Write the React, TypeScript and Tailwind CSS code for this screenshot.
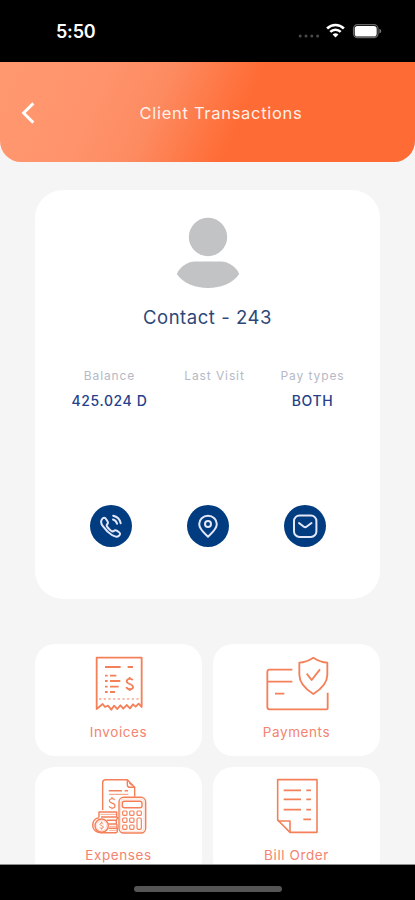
import type { ReactNode } from 'react';

const ORANGE = '#f4805a';

function StatusBar() {
  return (
    <div className="flex h-[62px] shrink-0 items-start justify-between bg-black pr-[33px] pl-[56px]">
      <span className="mt-[20px] text-[18px] leading-6 font-semibold tracking-[-0.2px] text-white">5:50</span>
      <div className="mt-[23px] flex items-center">
        <svg width="22" height="16" viewBox="0 0 22 16" fill="#4a4a4a">
          <circle cx="2.2" cy="13" r="1.5" />
          <circle cx="8" cy="13" r="1.5" />
          <circle cx="13.8" cy="13" r="1.5" />
          <circle cx="19.6" cy="13" r="1.5" />
        </svg>
        <svg className="ml-[6px]" width="19" height="16" viewBox="0 0 19 16" fill="none" stroke="#fff" strokeWidth="2.6">
          <path d="M1.1 5.5a12 12 0 0 1 16.8 0" />
          <path d="M4.3 8.9a7.4 7.4 0 0 1 10.4 0" />
          <path d="M9.5 14.6 6.6 11.6a4.2 4.2 0 0 1 5.8 0z" fill="#fff" stroke="none" />
        </svg>
        <svg className="ml-[7px]" width="30" height="16" viewBox="0 0 30 16">
          <rect x="1.5" y="1.7" width="24.5" height="13" rx="4" fill="none" stroke="#666" strokeWidth="1.2" />
          <rect x="2.7" y="3" width="22" height="10.5" rx="2.8" fill="#fff" />
          <path d="M27.4 6v4.4c1.2-.4 1.8-1.2 1.8-2.2s-.6-1.8-1.8-2.2z" fill="#777" />
        </svg>
      </div>
    </div>
  );
}

function Header() {
  return (
    <header className="grid h-[100px] shrink-0 grid-cols-[54px_1fr_27px] items-center rounded-b-[21px] bg-[linear-gradient(114deg,#ff986f_0%,#ff946c_22%,#fd8b61_38%,#ff6b34_58%,#ff6b34_100%)] pt-[2px]">
      <button type="button" aria-label="Back" className="pl-[21px]">
        <svg width="15" height="22" viewBox="0 0 15 22" fill="none" stroke="#fff" strokeWidth="2.9">
          <path d="M12.3 1.4 2.6 11l9.7 9.6" />
        </svg>
      </button>
      <h1 className="text-center text-[16.5px] tracking-[0.7px] whitespace-nowrap text-[#fff0e9]">Client Transactions</h1>
    </header>
  );
}

function Stat({ label, value }: { label: string; value?: string }) {
  return (
    <div className="flex flex-col items-center whitespace-nowrap">
      <span className="text-[12px] leading-4 tracking-[0.9px] text-[#b5b9c6]">{label}</span>
      <span className="mt-[9px] text-[14px] leading-4 font-medium tracking-[0.6px] text-[#26418a]">{value}</span>
    </div>
  );
}

function RoundButton({ label, children }: { label: string; children: ReactNode }) {
  return (
    <button type="button" aria-label={label} className="flex size-[42px] items-center justify-center rounded-full bg-[#023c80]">
      <svg width="26" height="26" viewBox="0 0 26 26" fill="none" stroke="#e4e7f8" strokeWidth="2" strokeLinecap="round" strokeLinejoin="round">
        {children}
      </svg>
    </button>
  );
}

function ContactCard() {
  return (
    <section className="mx-auto mt-[28px] flex h-[409px] w-[345px] shrink-0 flex-col items-center rounded-[28px] bg-white">
      <svg className="mt-[27px]" width="64" height="72" viewBox="0 0 64 72" fill="#c1c3c4">
        <circle cx="32" cy="20" r="19.2" />
        <path d="M.8 57C4 49.5 11 45 19 44.500h26c8 .5 15 5 18.200 12.500C57 66 45 71 32 71S7 66 .8 57z" />
      </svg>
      <h2 className="mt-[14px] text-[18.5px] leading-7 tracking-[0.55px] text-[#2d4779]">Contact - 243</h2>
      <div className="mt-[37px] grid w-[304px] grid-cols-[108px_102px_94px]">
        <Stat label="Balance" value="425.024 D" />
        <Stat label="Last Visit" />
        <Stat label="Pay types" value="BOTH" />
      </div>
      <div className="mt-[96px] flex gap-[55px]">
        <RoundButton label="Call">
          <path d="M4 6.200c1.300-1.900 3-1.900 4.200.1l1.400 2.200c.7 1.200.4 2-.4 2.800-.8.800-.7 1.500.3 2.900 1.200 1.700 2.300 2.800 3.900 3.800 1.100.7 1.900.5 2.700-.3.800-.8 1.600-.7 2.600-.1l2.100 1.400c1.600 1.100 1.600 2.500.2 3.700-1.600 1.400-4.100 1.200-7.100-.7-3.400-2.100-6.200-4.900-8.600-8.300C3 11 2.600 8.200 4 6.200z" />
          <path d="M15 6.500c2.100.6 3.500 2 4.100 4.200" />
          <path d="M15.200 2.700c4 .9 6.700 3.500 7.500 7.500" />
        </RoundButton>
        <RoundButton label="Location">
          <path d="M13 2.800c5 0 8.800 3.700 8.800 8.300 0 5.200-4.800 8.800-8.800 12.700-4-3.900-8.800-7.500-8.800-12.700C4.200 6.500 8 2.800 13 2.800z" />
          <circle cx="13" cy="11" r="3" />
        </RoundButton>
        <RoundButton label="Message">
          <rect x="2" y="2.5" width="22.4" height="21.4" rx="5.5" />
          <path d="m7 10 4.500 3.500c1 .8 2.300.8 3.300 0L19.500 10" />
        </RoundButton>
      </div>
    </section>
  );
}

function Tile({ label, viewBox, children }: { label: string; viewBox: string; children: ReactNode }) {
  return (
    <button type="button" className="flex h-[112px] flex-col items-center rounded-[20px] bg-white pt-[10px]">
      <svg width="72" height="60" viewBox={viewBox} fill="none" stroke={ORANGE} strokeWidth="5.5" strokeLinejoin="round">
        {children}
      </svg>
      <span className="mt-[8px] text-[13.5px] leading-5 tracking-[0.6px] text-[#f4846f]">{label}</span>
    </button>
  );
}

function InvoiceIcon() {
  return (
    <>
      <path d="M80 192V38h135v148l-9-10-9 9-8-7-9 12-10-10-10 11-9-10-9 11-10-10-8 12-10-12-9 4-7-9z" />
      <path d="M105 66h47M173 66h16" />
      <path d="M105 92h8M120 92h19M105 108h8M120 108h31M105 125h8M120 125h26M105 141h8M120 141h15" />
      <path d="M188 106c-2-6-17-6-18 3 0 10 19 6 19 17 0 9-17 9-20 0M179 96v6M179 131v7" />
      <path d="M87 162h124" strokeDasharray="7 7" strokeWidth="3.5" />
    </>
  );
}

function PaymentIcon() {
  return (
    <>
      <path d="M141 74H73q-7 0-7 7v105q0 7 7 7h171q3 0 3-3v-47M66 110h75M89 146h28" />
      <path d="M204 38c14 9 28 14 42 15v36c0 26-20 44-42 58-22-14-42-32-42-58V53c14-1 28-6 42-15z" />
      <path d="m184 86 15 19 25-32" />
    </>
  );
}

function ExpenseIcon() {
  return (
    <g strokeWidth="4.3">
      <path d="M98 135V53q0-9 9-9h65l22 23v28M172 44v15q0 8 8 8h14M178 53l8 8" />
      <path d="M116 77h40M164 77h10" />
      <path d="M117 88h58" strokeWidth="2.5" />
      <path d="M134 105c-3-6-16-5-16 3s17 5 17 14-14 9-18 2M126 96v5M126 128v5" strokeWidth="3.5" />
      <rect x="147" y="97" width="80" height="107" rx="14" />
      <rect x="152" y="102" width="70" height="97" rx="10" strokeWidth="1.5" opacity=".5" />
      <rect x="157" y="109" width="59" height="19" rx="6" />
      <g strokeWidth="3.5">
        <rect x="158" y="138" width="13" height="13" rx="3" />
        <rect x="179" y="138" width="13" height="13" rx="3" />
        <rect x="201" y="138" width="13" height="13" rx="3" />
        <rect x="158" y="159" width="13" height="13" rx="3" />
        <rect x="179" y="159" width="13" height="13" rx="3" />
        <rect x="158" y="180" width="13" height="13" rx="3" />
        <rect x="179" y="180" width="13" height="13" rx="3" />
        <rect x="201" y="159" width="13" height="34" rx="4" />
      </g>
      <path d="M87 156v-15h53v15H93M110 166h29l5-10M115 177h24v-10M116 190h25v-12M92 203h46q4 0 4-4v-10" />
      <path d="M91 148h48M118 196h22M118 184h22" strokeWidth="2" />
      <path d="M88 158c-12 1-20 10-20 22 0 13 9 23 25 23" />
      <circle cx="95" cy="182" r="20" />
      <circle cx="95" cy="182" r="15" strokeWidth="1.5" opacity=".6" />
      <path d="M100 177c-2-4-10-4-10 1s10 3 10 8-8 5-11 1M95 170v4M95 190v4" strokeWidth="3" />
    </g>
  );
}

function BillIcon() {
  return (
    <g strokeWidth="4.8">
      <path d="M97 44h118v158h-81l-37-37z" />
      <path d="M97 165q2 3 5 3h32v34" />
      <path d="M115 76h52M183 76h14M115 103h52M183 103h14M115 134h52M183 134h14M174 163h23" />
    </g>
  );
}

export default function App() {
  return (
    <div className="flex h-[900px] w-[415px] flex-col overflow-hidden bg-[#f5f5f5] font-['Inter',sans-serif]">
      <StatusBar />
      <main className="flex min-h-0 flex-1 flex-col overflow-hidden">
        <Header />
        <ContactCard />
        <div className="mx-auto mt-[45px] grid w-[345px] shrink-0 grid-cols-2 gap-[11px]">
          <Tile label="Invoices" viewBox="39 27 216 180">
            <InvoiceIcon />
          </Tile>
          <Tile label="Payments" viewBox="47 27 216 180">
            <PaymentIcon />
          </Tile>
          <Tile label="Expenses" viewBox="39 36 216 180">
            <ExpenseIcon />
          </Tile>
          <Tile label="Bill Order" viewBox="47 36 216 180">
            <BillIcon />
          </Tile>
        </div>
      </main>
      <footer className="flex h-[36px] shrink-0 justify-center border-t border-[#8d8f8d] bg-black pt-[21px]">
        <div className="h-[6px] w-[148px] rounded-full bg-[#555]" />
      </footer>
    </div>
  );
}
